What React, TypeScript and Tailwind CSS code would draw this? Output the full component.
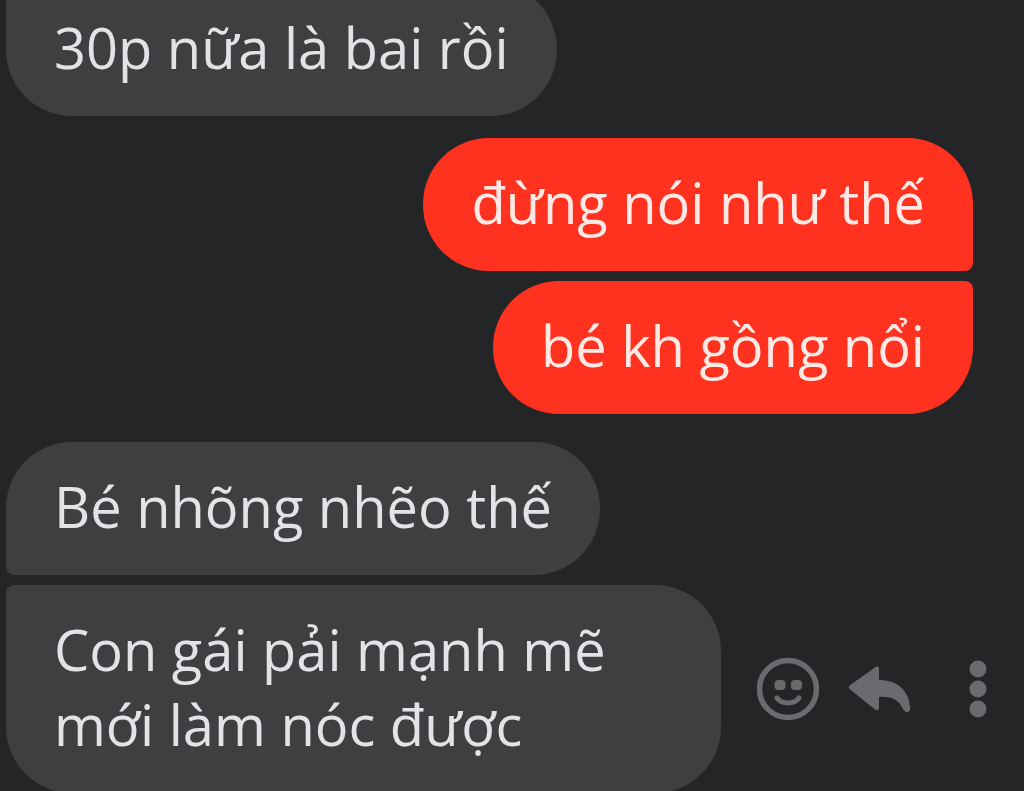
import React from "react";
import clsx from "clsx";

type BubbleProps = {
  mine?: boolean;
  className?: string;
  children: React.ReactNode;
};

const Bubble = ({ mine, className, children }: BubbleProps) => {
  return (
    <p
      className={clsx(
        "max-w-[715px] px-12 pt-[27px] pb-[31px] text-[56px] leading-[75px]",
        mine ? "bg-[#ff311f] text-[#ffe9e4]" : "bg-[#3e3f41] text-[#e2e3e6]",
        className
      )}
    >
      {children}
    </p>
  );
};

const MessageActions = () => {
  return (
    <div className="flex items-center pl-9 text-[#6a6b6e]">
      <button type="button" aria-label="React" className="cursor-pointer">
        <svg width="62" height="64" viewBox="0 0 62 64" fill="none">
          <circle cx="31" cy="32" r="28.500" stroke="currentColor" strokeWidth="5.500" />
          <rect x="17.500" y="23" width="11" height="10" rx="4" fill="currentColor" />
          <rect x="34" y="23" width="11" height="10" rx="4" fill="currentColor" />
          <path
            d="M20 41C25 47.500 37 47.500 42 41"
            stroke="currentColor"
            strokeWidth="5"
            strokeLinecap="round"
          />
        </svg>
      </button>
      <button type="button" aria-label="Reply" className="ml-7 cursor-pointer">
        <svg width="66" height="48" viewBox="0 0 66 48" fill="currentColor">
          <path d="M2.500 20.500Q1 22 2.500 24L28 44.500Q32 47 32 42V32C44 31 51 34 56 44Q58 48 61 47Q64 46 63 41C61 24 49 15 32 15V4Q32 0 28 2.500Z" />
        </svg>
      </button>
      <button type="button" aria-label="More" className="ml-14 cursor-pointer">
        <svg width="18" height="60" viewBox="0 0 18 60" fill="currentColor">
          <circle cx="9" cy="10" r="8.500" />
          <circle cx="9" cy="30" r="8.500" />
          <circle cx="9" cy="50" r="8.500" />
        </svg>
      </button>
    </div>
  );
};

const App = () => {
  return (
    <main className="h-screen overflow-hidden bg-[#242527] font-['Open_Sans','Noto_Sans',sans-serif]">
      {/* the list is scrolled a little past the first bubble */}
      <div className="-mt-[17px] flex flex-col pl-1.5">
        <div className="flex">
          <Bubble className="rounded-[66px] rounded-tl-lg">30p nữa là bai rồi</Bubble>
        </div>
        <div className="mt-[22px] flex flex-col items-end gap-2.5 pr-[51px]">
          <Bubble mine className="rounded-[66px] rounded-br-lg">đừng nói như thế</Bubble>
          <Bubble mine className="rounded-[66px] rounded-tr-lg">bé kh gồng nổi</Bubble>
        </div>
        <div className="mt-7 flex flex-col gap-2.5">
          <div className="flex">
            <Bubble className="rounded-[66px] rounded-bl-lg">Bé nhõng nhẽo thế</Bubble>
          </div>
          <div className="flex items-center">
            <Bubble className="rounded-[66px] rounded-tl-lg">
              Con gái pải mạnh mẽ mới làm nóc được
            </Bubble>
            <MessageActions />
          </div>
        </div>
      </div>
    </main>
  );
};

export default App;
